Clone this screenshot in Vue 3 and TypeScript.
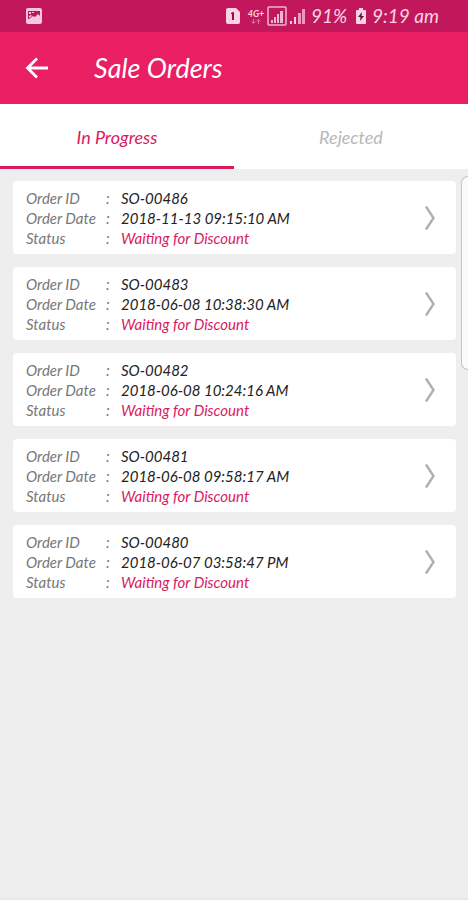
<script setup lang="ts">
import { ref } from 'vue'

interface Order {
  id: string
  date: string
  status: string
}

const tabs: string[] = ['In Progress', 'Rejected']
const active = ref<string>('In Progress')

const orders: Order[] = [
  { id: 'SO-00486', date: '2018-11-13 09:15:10 AM', status: 'Waiting for Discount' },
  { id: 'SO-00483', date: '2018-06-08 10:38:30 AM', status: 'Waiting for Discount' },
  { id: 'SO-00482', date: '2018-06-08 10:24:16 AM', status: 'Waiting for Discount' },
  { id: 'SO-00481', date: '2018-06-08 09:58:17 AM', status: 'Waiting for Discount' },
  { id: 'SO-00480', date: '2018-06-07 03:58:47 PM', status: 'Waiting for Discount' },
]
</script>

<template>
  <div class="screen">
    <div class="status-bar">
      <svg class="picture" width="16" height="16" viewBox="0 0 16 16" aria-hidden="true">
        <rect width="16" height="16" rx="2" fill="#f8c6dd" />
        <path d="M2 3h12v5l-2-2-3 3-2-1-4 3H2z" fill="#b5195a" />
        <path d="M3 4h2v2H3zM6 4h2v1H6zM3 8l2-1 1 1-3 2z" fill="#f8c6dd" />
      </svg>
      <div class="system">
        <svg width="14" height="16" viewBox="0 0 14 16" aria-hidden="true">
          <path d="M2 0h8l4 4v10a2 2 0 0 1-2 2H2a2 2 0 0 1-2-2V2a2 2 0 0 1 2-2z" fill="#fbd3e5" />
          <path d="M5 5l2-1h1v8H6V6H5z" fill="#98124a" />
        </svg>
        <span class="network">
          <span>4G+</span>
          <svg width="10" height="5" viewBox="0 0 10 5" fill="none" stroke="#dc6f9f" aria-hidden="true">
            <path d="M2.500 0v4.500M0.500 2.500l2 2 2-2M7.500 5V0.500M5.500 2.500l2-2 2 2" />
          </svg>
        </span>
        <svg width="20" height="20" viewBox="0 0 20 20" aria-hidden="true">
          <rect x="1" y="1" width="18" height="18" rx="1" fill="none" stroke="#f2b3ce" stroke-width="1.500" />
          <path d="M4 14h2v3H4zM7 11h2v6H7zM10 8h2v9h-2zM13 5h3v12h-3z" fill="#f2b3ce" />
        </svg>
        <svg class="signal" width="16" height="16" viewBox="0 0 16 16" aria-hidden="true">
          <path d="M0 13h2v3H0zM4 9h2v7H4z" fill="#fbd3e5" />
          <path d="M8 5h3v11H8zM12 1h3v15h-3z" fill="#ed99be" />
        </svg>
        <span class="percent">91%</span>
        <svg class="battery" width="12" height="16" viewBox="0 0 12 16" aria-hidden="true">
          <path d="M4 0h4v2h2a1 1 0 0 1 1 1v12a1 1 0 0 1-1 1H2a1 1 0 0 1-1-1V3a1 1 0 0 1 1-1h2z" fill="#fbd3e5" />
          <path d="M7 4L3 9h2.500L5 13l4-5H6.500z" fill="#56152f" />
        </svg>
        <span class="time">9:19 am</span>
      </div>
    </div>

    <header class="app-bar">
      <button class="back" type="button" aria-label="Back">
        <svg width="24" height="24" viewBox="0 0 24 24" fill="none" stroke="#fff" stroke-width="2.800" aria-hidden="true">
          <path d="M23 12H3M12 2.500L2.500 12l9.500 9.500" />
        </svg>
      </button>
      <h1>Sale Orders</h1>
    </header>

    <nav class="tabs">
      <button
        v-for="tab in tabs"
        :key="tab"
        type="button"
        :class="['tab', { active: tab === active }]"
        @click="active = tab"
      >{{ tab }}</button>
    </nav>

    <main class="list">
      <a v-for="order in orders" :key="order.id" class="card" href="#">
        <dl>
          <dt>Order ID</dt><dd class="colon">:</dd><dd>{{ order.id }}</dd>
          <dt>Order Date</dt><dd class="colon">:</dd><dd>{{ order.date }}</dd>
          <dt>Status</dt><dd class="colon">:</dd><dd class="state">{{ order.status }}</dd>
        </dl>
        <svg width="12" height="26" viewBox="0 0 12 26" fill="none" stroke="#b0b0b0" stroke-width="2.400" aria-hidden="true">
          <path d="M2 1.500L9.500 13 2 24.500" />
        </svg>
      </a>
      <div class="edge-handle"></div>
    </main>
  </div>
</template>

<style>
body {
  background: #eee;
}
</style>

<style scoped>
.screen {
  display: flex;
  flex-direction: column;
  min-height: 100vh;
  box-sizing: border-box;
  border-bottom: 2px solid #e8e7ec;
  background: #eee;
  font-family: Lato, "Open Sans", sans-serif;
  font-style: italic;
}
button {
  border: 0;
  padding: 0;
  background: none;
  font: inherit;
  cursor: pointer;
}
svg {
  display: block;
  flex: none;
}
.status-bar {
  display: flex;
  align-items: center;
  justify-content: space-between;
  height: 32px;
  padding: 0 26px;
  background: #c2185b;
  color: #fbd3e5;
}
.system {
  display: flex;
  align-items: center;
}
.network {
  display: flex;
  flex-direction: column;
  align-items: center;
  width: 18px;
  margin: 0 2px 0 7px;
  font-size: 9px;
  font-weight: 700;
  line-height: 10px;
}
.signal {
  margin-left: 3px;
}
.percent,
.time {
  font-size: 19px;
  line-height: 24px;
  white-space: nowrap;
}
.percent {
  width: 40px;
  margin-left: 5px;
}
.battery {
  margin: 0 5px 0 4px;
}
.time {
  width: 70px;
}
.app-bar {
  display: flex;
  align-items: center;
  gap: 45px;
  height: 72px;
  padding: 0 25px;
  background: #e91e63;
}
h1 {
  margin: 0;
  color: #fff;
  font-size: 27px;
  font-weight: 400;
  line-height: 32px;
}
.tabs {
  display: grid;
  grid-template-columns: 1fr 1fr;
  height: 65px;
  background: #fff;
}
.tab {
  border-top: 3px solid transparent;
  border-bottom: 3px solid transparent;
  color: #b8b8b8;
  font-size: 18px;
}
.tab.active {
  border-bottom-color: #d81b60;
  color: #d81b60;
}
.list {
  position: relative;
  display: flex;
  flex-direction: column;
  gap: 13px;
  padding: 12px 12px 12px 13px;
}
.card {
  display: flex;
  align-items: center;
  justify-content: space-between;
  padding: 7px 20px 6px 13px;
  border-radius: 4px;
  background: #fff;
  color: #222;
  text-decoration: none;
}
dl {
  display: grid;
  grid-template-columns: 80px 15px auto;
  margin: 0;
  font-size: 15px;
  line-height: 20px;
}
dt {
  color: #777;
}
dd {
  margin: 0;
  white-space: nowrap;
}
.colon {
  color: #777;
}
.state {
  color: #d81b60;
}
.edge-handle {
  position: absolute;
  top: 7px;
  right: 0;
  width: 7px;
  height: 194px;
  box-sizing: border-box;
  border: 1px solid #c4c4c4;
  border-right: 0;
  border-radius: 7px 0 0 7px;
  background: #fafafa;
}
</style>
